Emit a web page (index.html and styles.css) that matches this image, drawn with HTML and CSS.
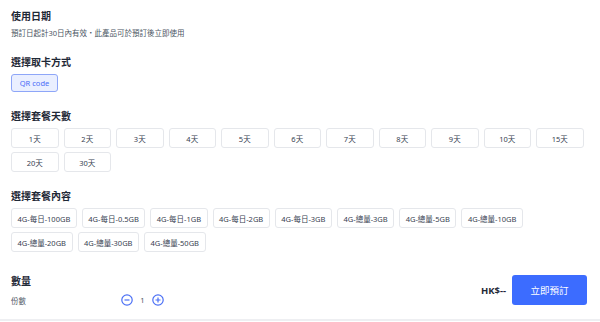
FILE: index.html
```html
<!DOCTYPE html>
<html lang="zh-Hant">
<head>
    <meta charset="UTF-8">
    <meta name="viewport" content="width=device-width, initial-scale=1.0">
    <title>選擇套餐</title>
    <link rel="stylesheet" href="styles.css">
</head>
<body>
    <div class="page">
        <!-- 使用日期 -->
        <section class="block">
            <h2 class="block-title">使用日期</h2>
            <p class="note">預訂日起計30日內有效・此產品可於預訂後立即使用</p>
        </section>

        <!-- 取卡方式 -->
        <section class="block">
            <h2 class="block-title">選擇取卡方式</h2>
            <div class="options">
                <button class="opt opt-active">QR code</button>
            </div>
        </section>

        <!-- 天數 -->
        <section class="block">
            <h2 class="block-title">選擇套餐天數</h2>
            <div class="options">
                <button class="opt opt-day">1天</button>
                <button class="opt opt-day">2天</button>
                <button class="opt opt-day">3天</button>
                <button class="opt opt-day">4天</button>
                <button class="opt opt-day">5天</button>
                <button class="opt opt-day">6天</button>
                <button class="opt opt-day">7天</button>
                <button class="opt opt-day">8天</button>
                <button class="opt opt-day">9天</button>
                <button class="opt opt-day">10天</button>
                <button class="opt opt-day">15天</button>
                <button class="opt opt-day">20天</button>
                <button class="opt opt-day">30天</button>
            </div>
        </section>

        <!-- 套餐內容 -->
        <section class="block">
            <h2 class="block-title">選擇套餐內容</h2>
            <div class="options">
                <button class="opt">4G-每日-100GB</button>
                <button class="opt">4G-每日-0.5GB</button>
                <button class="opt">4G-每日-1GB</button>
                <button class="opt">4G-每日-2GB</button>
                <button class="opt">4G-每日-3GB</button>
                <button class="opt">4G-總量-3GB</button>
                <button class="opt">4G-總量-5GB</button>
                <button class="opt">4G-總量-10GB</button>
                <button class="opt">4G-總量-20GB</button>
                <button class="opt">4G-總量-30GB</button>
                <button class="opt">4G-總量-50GB</button>
            </div>
        </section>

        <!-- 數量 + 預訂 -->
        <div class="footer">
            <div class="qty">
                <h2 class="block-title">數量</h2>
                <div class="qty-row">
                    <span class="qty-label">份數</span>
                    <button class="step" aria-label="減少">
                        <svg width="12" height="12" viewBox="0 0 12 12">
                            <circle cx="6" cy="6" r="5.2" fill="none" stroke="#4a6ff5" stroke-width="1.2"/>
                            <path d="M3.5 6h5" stroke="#4a6ff5" stroke-width="1.2"/>
                        </svg>
                    </button>
                    <span class="qty-num">1</span>
                    <button class="step" aria-label="增加">
                        <svg width="12" height="12" viewBox="0 0 12 12">
                            <circle cx="6" cy="6" r="5.2" fill="none" stroke="#4a6ff5" stroke-width="1.2"/>
                            <path d="M3.5 6h5M6 3.5v5" stroke="#4a6ff5" stroke-width="1.2"/>
                        </svg>
                    </button>
                </div>
            </div>
            <div class="checkout">
                <span class="price">HK$--</span>
                <button class="book">立即預訂</button>
            </div>
        </div>
    </div>
</body>
</html>
```

FILE: styles.css
```css
body {
    margin: 0;
    font-family: "Noto Sans", "Noto Sans CJK TC", sans-serif;
    color: #1f2937;
    background: #fff;
}
.page {
    padding: 9px 11px 0 11px;
    border-bottom: 2px solid #eeeff2;
}
.block {
    display: flex;
    flex-direction: column;
    gap: 5px;
    margin-bottom: 17px;
}
.block-title {
    margin: 0;
    font-size: 10px;
    line-height: 14px;
    font-weight: 700;
    color: #1f2937;
}
.note {
    margin: 0;
    font-size: 7.5px;
    line-height: 10px;
    color: #4b5563;
}
.options {
    display: flex;
    flex-wrap: wrap;
    gap: 4px 5px;
}
.opt {
    height: 20px;
    padding: 0 5.5px;
    font-family: inherit;
    font-size: 7.5px;
    color: #374151;
    background: #fff;
    border: 1px solid #e5e7eb;
    border-radius: 3px;
}
.opt-day {
    width: 47.5px;
    padding: 0;
}
.opt-active {
    width: 47px;
    height: 18px;
    padding: 0;
    color: #4a6cf7;
    background: #eaefff;
    border-color: #8ea6f8;
}
.footer {
    display: flex;
    align-items: center;
    justify-content: space-between;
    padding: 5px 2px 13px 0;
}
.qty {
    display: flex;
    flex-direction: column;
    gap: 6px;
}
.qty-row {
    display: flex;
    align-items: center;
    height: 12px;
}
.qty-label {
    width: 110px;
    font-size: 7.5px;
    color: #4b5563;
}
.step {
    display: flex;
    padding: 0;
    border: none;
    background: none;
}
.qty-num {
    width: 19px;
    text-align: center;
    font-size: 7.5px;
    color: #4b5563;
}
.checkout {
    display: flex;
    align-items: center;
    gap: 6px;
}
.price {
    font-size: 9.5px;
    font-weight: 700;
    color: #1f2937;
}
.book {
    width: 75px;
    height: 30px;
    font-family: inherit;
    font-size: 9.5px;
    color: #fff;
    background: #3c6cff;
    border: none;
    border-radius: 3px;
}
```
